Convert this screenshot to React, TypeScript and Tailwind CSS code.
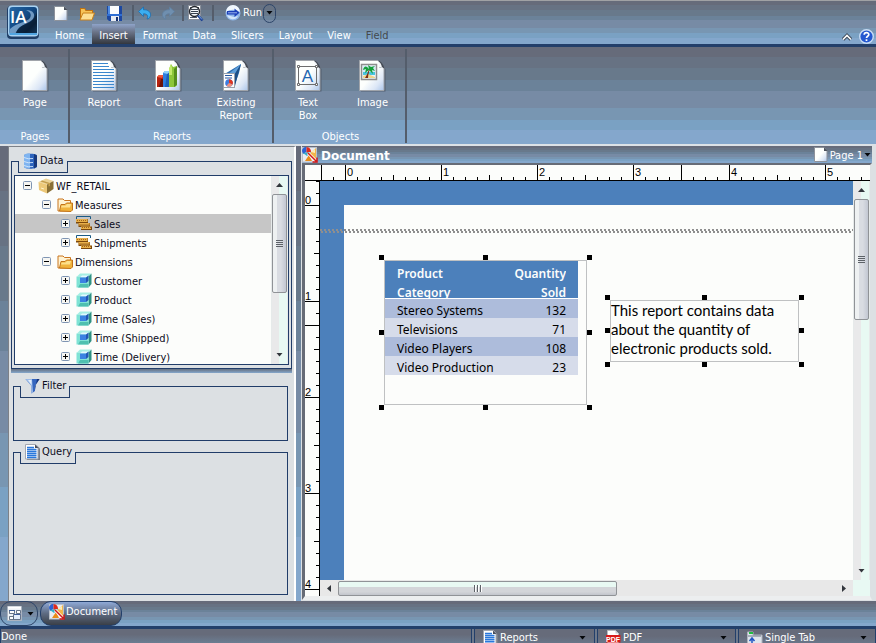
import { useState, type ReactNode } from "react";

const BANDS =
  "bg-[linear-gradient(#666b7a_10%,#677283_10%_22%,#68798b_22%_34%,#6b8299_34%_45%,#778ba5_45%_63%,#7896b2_63%_75%,#7aa1c3_75%_86%,#84a7cc_86%)]";

/* ---------- icons ---------- */

function PageShape({ children }: { children?: ReactNode }) {
  return (
    <svg width="27" height="32" viewBox="0 0 27 32" aria-hidden="true">
      <defs>
        <linearGradient id="sheet" x1="0" y1="0" x2="1" y2="1">
          <stop offset="0.5" stopColor="#fdfffd" />
          <stop offset="0.78" stopColor="#dbe6f6" />
          <stop offset="1" stopColor="#a9c4ea" />
        </linearGradient>
      </defs>
      <path d="M2 2H20L26.500 9V31.500H2Z" fill="#4e5868" opacity="0.8" />
      <path d="M0.500 0.500H19L25 8V30.500H0.500Z" fill="url(#sheet)" stroke="#a0a4aa" />
      <path d="M19 0.500C21 2 21 5 20 8C22 7 24 7 25.500 9C25 5 22 1 19 0.500Z" fill="#454b55" />
      <path d="M18.500 1C20 3 20 5 19.500 8C21 7 22 7 23 7.500C22.500 4 21 2 18.500 1Z" fill="#f4f7fa" />
      {children}
    </svg>
  );
}

function ReportArt() {
  return <path d="M2 3.500H17M2 6.500H18M2 9.500H23M2 12.500H23M2 15.500H23M2 18.500H23M2 21.500H23M2 24.500H23M2 27.500H23" stroke="#3a87cd" strokeWidth="1.200" />;
}

function ChartArt() {
  return (
    <g>
      <path d="M2 17L4 15H9V27H2Z" fill="#b5220f" />
      <path d="M2 17L4 15H9L7 18Z" fill="#f0553a" />
      <path d="M6 19H9V27H4Z" fill="#6b1208" />
      <path d="M8 13L10 11H15V27H8Z" fill="#2e7fe0" />
      <path d="M8 13L10 11H15L13 14Z" fill="#8ed0fb" />
      <path d="M12 14L15 12V27H10Z" fill="#1553a8" opacity="0.7" />
      <path d="M14 9L16 4L18 7L22 6V25L20 27H14Z" fill="#8cc63a" />
      <path d="M19 9L22 6V25L19 27Z" fill="#568f1c" />
      <path d="M14 9L16 4L17 8V15H14Z" fill="#c3ea6c" />
    </g>
  );
}

function ExistingArt() {
  return (
    <g>
      <path d="M18 4L0 15L7 17L11 27L16 13Z" fill="#2a6cb0" />
      <path d="M18 4L4 15L10 17Z" fill="#5d9ed8" />
      <path d="M18 4L10 17L12 26L15 14Z" fill="#1c4f86" />
      <rect x="0.500" y="13.500" width="11" height="14" fill="#fcfdfe" stroke="#9aa0aa" />
      <path d="M2 15.500H9M2 18H9" stroke="#2456a0" strokeWidth="1.200" />
      <circle cx="6" cy="23" r="3.800" fill="#3d7ce0" />
      <path d="M6 23V19.200A3.800 3.800 0 0 1 9.600 24.500Z" fill="#e2341f" />
      <path d="M6 23L9.600 24.500A3.800 3.800 0 0 1 3.500 25.800Z" fill="#f0907a" />
    </g>
  );
}

function TextBoxArt() {
  return (
    <g>
      <path d="M3.500 6.500H21.500V24.500H3.500Z" fill="none" stroke="#6d6d6d" />
      <path d="M2.500 5.500h2v2h-2zM20.500 5.500h2v2h-2zM2.500 23.500h2v2h-2zM20.500 23.500h2v2h-2z" fill="#fff" stroke="#6d6d6d" />
      <text x="12.500" y="22" textAnchor="middle" fontSize="17" fill="#1f66b0" fontFamily="Liberation Sans, sans-serif">A</text>
    </g>
  );
}

function ImageArt() {
  return (
    <g>
      <rect x="2.500" y="4.500" width="15" height="15" fill="#eaf4fa" stroke="#8d8d8d" strokeWidth="1.500" />
      <rect x="4" y="6" width="12" height="6" fill="#d3ecf8" />
      <rect x="4" y="12" width="12" height="3" fill="#49c5e0" />
      <path d="M4 18V16L9 14L16 17V18Z" fill="#efd58d" />
      <path d="M10 9C9 12 8 15 6 18H9C9 15 10 12 11 9Z" fill="#7d2d14" />
      <path d="M10 9C7 5 5 6 4 10L7 9L6 13L10 10L14 14L13 10L16 11L14 8L16 6L12 7L9 5Z" fill="#17a03a" />
    </g>
  );
}

function SmallPage() {
  return (
    <svg width="14" height="15" viewBox="0 0 14 15" aria-hidden="true">
      <path d="M0.500 0.500H10L13 4V14.500H0.500Z" fill="url(#sheet)" stroke="#8d929b" />
      <path d="M10 0.500V4H13.500Z" fill="#4a505b" />
    </svg>
  );
}

function DocLines() {
  return (
    <svg width="15" height="16" viewBox="0 0 15 16" aria-hidden="true">
      <path d="M2 1.500H12L15 4.500V16H2Z" fill="#7a7e88" />
      <path d="M0.500 0.500H10.500L13 3.500V15H0.500Z" fill="#fff" stroke="#a2a7b0" />
      <path d="M2 3.500H9M2 5.500H11.500M2 7.500H11.500M2 9.500H11.500M2 11.500H11.500M2 13.500H11.500" stroke="#2a78dc" strokeWidth="1.400" />
      <path d="M10 0.500V4H13.500Z" fill="#474c58" />
    </svg>
  );
}

function Folder() {
  return (
    <svg width="16" height="16" viewBox="0 0 16 16" aria-hidden="true">
      <path d="M1 14V2H6L7.500 3.500H13.500V14Z" fill="#fff3d2" stroke="#c9741d" />
      <path d="M2.500 14L4 7.500H8L9.500 6H15.500V13L14 14.500Z" fill="#f0b33c" stroke="#c2741a" />
      <path d="M4.500 8.500H8.500L10 7H14L13 10.500H4Z" fill="#fde08c" />
    </svg>
  );
}

function OpenFolder() {
  return (
    <svg width="16" height="15" viewBox="0 0 16 15" aria-hidden="true">
      <path d="M1 13V2H6L7 4H14V13Z" fill="#c07310" />
      <path d="M2 12V3H5.500L6.500 5H13V12Z" fill="#f7c356" />
      <path d="M1 14L4 7H15.500L13 14Z" fill="#fddf93" stroke="#c8801a" />
    </svg>
  );
}

function Floppy() {
  return (
    <svg width="15" height="15" viewBox="0 0 15 15" aria-hidden="true">
      <path d="M0 0H15V15H2L0 13Z" fill="#1d48a0" />
      <path d="M1 0H3V8H1Z" fill="#4f8ce2" />
      <rect x="3" y="0" width="9" height="8" fill="#fbfcfd" />
      <path d="M0 8H15V10H0Z" fill="#2f6fd4" />
      <rect x="4" y="10" width="8" height="5" fill="#e8ecf2" />
      <rect x="9" y="11" width="2" height="4" fill="#16306c" />
    </svg>
  );
}

function Arrow({ flip = false, color, edge }: { flip?: boolean; color: string; edge: string }) {
  return (
    <svg width="14" height="14" viewBox="0 0 14 14" aria-hidden="true">
      <path
        transform={flip ? "translate(14 0) scale(-1 1)" : undefined}
        d="M0.500 5.500L5.500 1V3.800C10 3.500 13 6 12.500 9.500C12 12 10.500 13 9 13C10.500 10 9.500 7.800 5.500 7.800V10.500Z"
        fill={color}
        stroke={edge}
        strokeWidth="0.800"
      />
    </svg>
  );
}

function Preview() {
  return (
    <svg width="16" height="17" viewBox="0 0 16 17" aria-hidden="true">
      <path d="M0.500 0.500H12.500V14.500H0.500Z" fill="#fff" stroke="#8a909b" />
      <path d="M2 2.500H11M2 12.500H9" stroke="#4f5a6c" />
      <circle cx="6.500" cy="6.500" r="5" fill="#f4f7fa" stroke="#23262c" strokeWidth="1.300" />
      <path d="M3 4.500H10M3 6.500H10M3 8.500H10" stroke="#39424f" />
      <path d="M10 10.500L14.500 15.500" stroke="#1c3e90" strokeWidth="2.600" />
      <path d="M10.500 10.500L14 14.500" stroke="#6ea0e8" />
    </svg>
  );
}

function RunBall() {
  return (
    <svg width="17" height="16" viewBox="0 0 17 16" aria-hidden="true">
      <circle cx="8" cy="8" r="7.500" fill="#8fb6e8" />
      <path d="M1 7A7 7 0 0 1 15 7C11 4 5 4 1 7Z" fill="#f1f7fd" />
      <path d="M2 10A6 6 0 0 0 13 11L9 12Z" fill="#d3e7fa" />
      <path d="M2 6H9.500V3.500L14.500 7.800L9.500 12V9.500H2Z" fill="#1b3fb8" />
      <path d="M3 7.800H12" stroke="#b9d2fb" strokeWidth="0.800" />
    </svg>
  );
}

function Logo() {
  return (
    <svg width="33" height="34" viewBox="0 0 33 34" aria-hidden="true">
      <defs>
        <linearGradient id="logo" x1="0" y1="0" x2="1" y2="1">
          <stop offset="0" stopColor="#2767a4" />
          <stop offset="0.450" stopColor="#124a86" />
          <stop offset="0.750" stopColor="#0b2847" />
          <stop offset="1" stopColor="#2676b8" />
        </linearGradient>
      </defs>
      <rect x="0" y="1" width="32" height="33" rx="4" fill="#203f68" />
      <rect x="1" y="0.500" width="30.500" height="31" rx="4" fill="#a9d2f2" />
      <rect x="2.500" y="2" width="27.500" height="28" rx="3" fill="url(#logo)" />
      <path d="M19 5C26 5 29 9 26 14C23 18 15 19 11 24C9 27 9 28 10 30H3V24C9 18 20 17 23 13C25 9 23 7 19 5Z" fill="#8fb7dc" opacity="0.75" />
      <path d="M8 30C9 25 14 21 19 19C25 17 28 13 30 7V30Z" fill="#091a2e" opacity="0.650" />
      <path d="M2.500 28H30V30H2.500Z" fill="#51a4e0" />
      <text x="3" y="18" fontSize="17" fontWeight="600" fill="#fff" fontFamily="Open Sans, sans-serif">IA</text>
    </svg>
  );
}

function DocumentIcon() {
  return (
    <svg width="16" height="16" viewBox="0 0 16 16" aria-hidden="true">
      <rect x="0.500" y="0.500" width="14" height="14.500" fill="#e8edf3" stroke="#b9bfc8" />
      <path d="M0 4A4 4 0 0 1 4.500 0V5L1 7Z" fill="#2d62d2" />
      <path d="M4.500 0A5 5 0 0 1 9 5L4.500 6Z" fill="#e02a1c" />
      <path d="M1 6L9 5L5 9Z" fill="#35b0c9" />
      <path d="M14 1V13L6 8Z" fill="#f2b54a" />
      <path d="M9 5L13 2V6Z" fill="#fdeeb8" />
      <path d="M3 14L7 8L10 14Z" fill="#e98c18" />
      <path d="M6 6L14 14" stroke="#fff" strokeWidth="3" />
      <path d="M6 6L14 14M15 10.500V15H10.500" fill="none" stroke="#cf1616" strokeWidth="1.500" />
    </svg>
  );
}

function Database() {
  return (
    <svg width="15" height="16" viewBox="0 0 15 16" aria-hidden="true">
      <path d="M1 2.500C1 0 14 0 14 2.500V13.500C14 16.500 1 16.500 1 13.500Z" fill="#2c63bd" />
      <path d="M1 3C1 0 7 0.500 7 0.700V15.500C2 15.500 1 14.500 1 13.500Z" fill="#7fb4f0" />
      <path d="M11 1V15.500L14 13.500V2.500Z" fill="#17387c" />
      <path d="M1 4.500Q5 6.500 10 5.500M1 8.500Q5 10.500 10 9.500M1 12.500Q5 14.500 10 13.500" fill="none" stroke="#d5e8fb" strokeWidth="0.900" />
    </svg>
  );
}

function Funnel() {
  return (
    <svg width="15" height="16" viewBox="0 0 15 16" aria-hidden="true">
      <path d="M0.500 1H14.500L10 8V13L6.500 15.500V8Z" fill="#3566bf" />
      <path d="M0.500 1H7L8 14.500L6.500 15.500V8Z" fill="#9dbce9" />
      <path d="M3 2L6.500 7V2Z" fill="#e3eefb" />
      <path d="M12 1H14.500L10 8V12Z" fill="#17357c" />
    </svg>
  );
}

function Box() {
  return (
    <svg width="16" height="16" viewBox="0 0 16 16" aria-hidden="true">
      <path d="M0.500 4L8 0.500L15.500 3L9 6.500Z" fill="#ecd396" />
      <path d="M0.500 4L9 6.500V15.500L1 12Z" fill="#ecc878" />
      <path d="M9 6.500L15.500 3V11L9 15.500Z" fill="#8a7035" />
      <path d="M4 2.500L12 5V8L10.500 8.500V6L2.500 3.500Z" fill="#c39d4c" />
      <path d="M3 10L6 11" stroke="#fff3cc" />
    </svg>
  );
}

function MeasureIcon() {
  return (
    <svg width="16" height="15" viewBox="0 0 16 15" aria-hidden="true">
      <path d="M0.500 3V0.500H14.500V3" fill="none" stroke="#1b5b85" />
      <path d="M0 3H12V7H14V10.500H16V14H5V11H2.500V7.500H0Z" fill="#7c480c" />
      <path d="M0 3H11.500V6H0ZM2.500 7H13.500V9.500H2.500ZM5 10.500H15V13H5Z" fill="#e8b04a" />
      <path d="M1 4.500H11M3.500 8.500H13M6 11.500H15" stroke="#a4661a" strokeDasharray="1 1" />
    </svg>
  );
}

function Cube() {
  return (
    <svg width="16" height="15" viewBox="0 0 16 15" aria-hidden="true">
      <path d="M4 0.500H15.500L12.500 3.500H1Z" fill="#a6efe4" />
      <path d="M12.500 3.500L15.500 0.500V11L12.500 14.500Z" fill="#2f9184" />
      <path d="M0.500 3.500H12.500V14.500H0.500Z" fill="#7fe3d5" />
      <path d="M2 14.500L4 11H12.500V14.500Z" fill="#4fc0b0" />
      <path d="M6 2.500H12.500L10.500 4.500H4Z" fill="#e2f8ff" />
      <path d="M4 4.500H10V10H4Z" fill="#3b82e2" />
      <path d="M10 4.500L12.500 2.500V8L10 10Z" fill="#2256b4" />
    </svg>
  );
}

function Windows() {
  return (
    <svg width="16" height="16" viewBox="0 0 16 16" aria-hidden="true">
      <path d="M0.500 0.500H14.500V14.500H0.500Z" fill="#eef2f6" stroke="#aab3c0" />
      <path d="M1 1.500H14" stroke="#fff" strokeWidth="2" />
      <path d="M2.500 4.500h5v3h-5zM2.500 10.500h4v3h-4zM9.500 4.500h4v3h-4z" fill="#fff" stroke="#44546c" strokeWidth="0.800" />
      <path d="M6.500 8.500h7v5h-7z" fill="#e6effc" stroke="#44546c" strokeWidth="0.800" />
      <path d="M2 4.500H8M7 8.500H13.500" stroke="#3f5f9a" />
    </svg>
  );
}

function PdfIcon() {
  return (
    <svg width="15" height="16" viewBox="0 0 15 16" aria-hidden="true">
      <path d="M1.500 0.500H9.500L12.500 3.500V15H1.500Z" fill="#fff" stroke="#b9bcc2" />
      <path d="M9.500 0.500V3.500H12.500Z" fill="#c8ccd2" />
      <rect x="0" y="5" width="14.500" height="7.500" fill="#d81a1a" />
      <text x="7" y="11.500" textAnchor="middle" fontSize="7" fontWeight="bold" fill="#fff" fontFamily="Liberation Sans, sans-serif">PDF</text>
    </svg>
  );
}

function TabIcon() {
  return (
    <svg width="16" height="15" viewBox="0 0 16 15" aria-hidden="true">
      <path d="M0.500 14V1H6V4H15V14Z" fill="#dfe5ec" stroke="#aeb4bf" />
      <rect x="2" y="1" width="4" height="2" fill="#1fbf3f" />
      <path d="M1 5H14" stroke="#6f7785" />
      <path d="M5 14V8M2.500 10L5 7L7.500 10" fill="none" stroke="#2155c4" strokeWidth="1.500" />
    </svg>
  );
}

function Caret({ up = false, dark = "#05070a" }: { up?: boolean; dark?: string }) {
  return (
    <svg width="7" height="4" viewBox="0 0 7 4" aria-hidden="true">
      <path d={up ? "M0 4H7L3.500 0Z" : "M0.500 0H6.500L3.500 3.500Z"} fill={dark} />
    </svg>
  );
}

/* ---------- shared parts ---------- */

function Divider() {
  return <span className="h-4 w-[2px] bg-[#545d6b]" />;
}

function VScroll({ thumb }: { thumb: string }) {
  return (
    <div className="flex w-[17px] shrink-0 flex-col border-x border-[#e6eaea] bg-[linear-gradient(90deg,#e9e9ea_45%,#e8f9f3_45%)]">
      <button type="button" aria-label="Scroll up" className="flex h-[18px] shrink-0 items-center justify-center">
        <Caret up dark="#32363c" />
      </button>
      <div
        className={`flex flex-col items-center justify-center gap-px rounded-[2px] border border-[#909397] bg-[linear-gradient(90deg,#eef1f2_30%,#d9dce2_30%_60%,#c2c7d2)] ${thumb}`}
      >
        <i className="h-px w-[7px] bg-[#5d6268]" />
        <i className="h-px w-[7px] bg-[#5d6268]" />
        <i className="h-px w-[7px] bg-[#5d6268]" />
        <i className="h-px w-[7px] bg-[#5d6268]" />
      </div>
      <button type="button" aria-label="Scroll down" className="mt-auto flex h-[18px] shrink-0 items-center justify-center">
        <Caret dark="#32363c" />
      </button>
    </div>
  );
}

interface GroupBoxProps {
  title: string;
  icon: ReactNode;
  className?: string;
  children?: ReactNode;
}

function GroupBox({ title, icon, className = "", children }: GroupBoxProps) {
  return (
    <section className={`relative border border-[#213d69] ${className}`}>
      <h2 className="absolute -top-px left-[6px] flex h-3 items-end border-x border-b border-[#213d69] bg-[#dce0e3] pr-[3px] pl-1">
        <span className="flex h-[22px] items-center gap-[2px] leading-4">
          {icon}
          <span>{title}</span>
        </span>
      </h2>
      {children}
    </section>
  );
}

/* ---------- top ---------- */

const TABS = ["Home", "Insert", "Format", "Data", "Slicers", "Layout", "View", "Field"];

function TitleBar() {
  const [active, setActive] = useState("Insert");
  return (
    <header className={`flex h-[47px] shrink-0 border-t border-b-3 border-t-[#a0a1a4] border-b-[#233f6a] ${BANDS}`}>
      <button type="button" aria-label="InfoAssist menu" className="ml-[7px] self-start pt-1">
        <Logo />
      </button>
      <div className="flex flex-1 flex-col">
        <div className="ml-[14px] flex h-[23px] items-center pt-px">
          <button type="button" aria-label="New"><SmallPage /></button>
          <button type="button" aria-label="Open" className="ml-[11px]"><OpenFolder /></button>
          <button type="button" aria-label="Save" className="mr-[10px] ml-3"><Floppy /></button>
          <Divider />
          <button type="button" aria-label="Undo" className="ml-1"><Arrow color="#3aaef0" edge="#1c6cae" /></button>
          <button type="button" aria-label="Redo" className="mr-[7px] ml-[9px]"><Arrow flip color="#6f8faf" edge="#5f7f9f" /></button>
          <Divider />
          <button type="button" aria-label="Preview" className="mr-2 ml-1"><Preview /></button>
          <Divider />
          <button type="button" className="ml-[11px] flex items-center gap-px text-white">
            <RunBall />
            <span className="pt-px">Run</span>
          </button>
          <button
            type="button"
            aria-label="Run options"
            className="ml-px flex h-[19px] w-[13px] items-center justify-center rounded-full border border-[#2d4569]"
          >
            <Caret />
          </button>
        </div>
        <nav className="ml-2 flex h-5 gap-px">
          {TABS.map((tab) => (
            <button
              key={tab}
              type="button"
              onClick={() => setActive(tab)}
              className={`px-[7px] pt-[3px] leading-4 ${
                tab === active ? "bg-[linear-gradient(#8fa3c9,#6b7488_40%,#33373e)]" : ""
              } ${tab === "Field" ? "text-[#45484c]" : "text-white"}`}
            >
              {tab}
            </button>
          ))}
        </nav>
      </div>
      <div className="mr-[2px] flex items-end gap-[7px]">
        <button type="button" aria-label="Collapse ribbon" className="pb-[3px]">
          <svg width="10" height="8" viewBox="0 0 10 8" aria-hidden="true">
            <path d="M1 6.500L5 2.500L9 6.500" fill="none" stroke="#3b4656" strokeWidth="3.500" />
            <path d="M1 6.500L5 2.500L9 6.500" fill="none" stroke="#fff" strokeWidth="1.600" />
          </svg>
        </button>
        <button type="button" aria-label="Help">
          <svg width="15" height="15" viewBox="0 0 15 15" aria-hidden="true">
            <circle cx="7.500" cy="7.500" r="6.800" fill="#2458d0" stroke="#c8dcf4" strokeWidth="1.400" />
            <path d="M5.200 5.800C5.200 2.900 9.800 2.900 9.800 5.600C9.800 7.300 7.500 7.200 7.500 9M7.500 10.200V12" fill="none" stroke="#fff" strokeWidth="1.700" />
          </svg>
        </button>
      </div>
    </header>
  );
}

function RibbonButton({ label, art, className = "w-16" }: { label: string; art?: ReactNode; className?: string }) {
  return (
    <button type="button" className={`flex flex-col items-center ${className}`}>
      <PageShape>{art}</PageShape>
      <span className="mt-1 w-12 leading-[13px]">{label}</span>
    </button>
  );
}

function RibbonGroup({ label, children }: { label: string; children: ReactNode }) {
  return (
    <div className="mt-[2px] mb-px flex flex-col border-r-2 border-[#545d6b] pt-[11px] pl-[2px]">
      <div className="flex flex-1 items-start">{children}</div>
      <div className="text-center leading-[13px]">{label}</div>
    </div>
  );
}

function Ribbon() {
  return (
    <div className={`flex h-[99px] shrink-0 border-b-2 border-[#dce1e6] text-white ${BANDS}`}>
      <RibbonGroup label="Pages">
        <RibbonButton label="Page" className="w-[66px]" />
      </RibbonGroup>
      <RibbonGroup label="Reports">
        <RibbonButton label="Report" art={<ReportArt />} />
        <RibbonButton label="Chart" art={<ChartArt />} />
        <RibbonButton label="Existing Report" art={<ExistingArt />} className="w-18" />
      </RibbonGroup>
      <RibbonGroup label="Objects">
        <RibbonButton label="Text Box" art={<TextBoxArt />} className="w-16 [&>span]:w-7" />
        <RibbonButton label="Image" art={<ImageArt />} className="w-[65px]" />
      </RibbonGroup>
    </div>
  );
}

/* ---------- left panel ---------- */

interface TreeNode {
  label: string;
  level: 0 | 1 | 2;
  icon: ReactNode;
}

const TREE: TreeNode[] = [
  { label: "WF_RETAIL", level: 0, icon: <Box /> },
  { label: "Measures", level: 1, icon: <Folder /> },
  { label: "Sales", level: 2, icon: <MeasureIcon /> },
  { label: "Shipments", level: 2, icon: <MeasureIcon /> },
  { label: "Dimensions", level: 1, icon: <Folder /> },
  { label: "Customer", level: 2, icon: <Cube /> },
  { label: "Product", level: 2, icon: <Cube /> },
  { label: "Time (Sales)", level: 2, icon: <Cube /> },
  { label: "Time (Shipped)", level: 2, icon: <Cube /> },
  { label: "Time (Delivery)", level: 2, icon: <Cube /> },
];

const INDENT = ["pl-2", "pl-[27px]", "pl-[46px]"];

function Tree() {
  const [selected, setSelected] = useState("Sales");
  return (
    <ul role="tree" className="min-w-0 flex-1">
      {TREE.map((node) => (
        <li
          key={node.label}
          role="treeitem"
          aria-selected={selected === node.label}
          onClick={() => setSelected(node.label)}
          className={`flex h-[19px] items-center ${INDENT[node.level]} ${selected === node.label ? "bg-[#c6c6c6]" : ""}`}
        >
          <svg width="9" height="9" viewBox="0 0 9 9" className="mr-[6px] shrink-0" aria-hidden="true">
            <rect x="0.500" y="0.500" width="8" height="8" rx="1" fill="#f6f6f2" stroke="#7f95b3" />
            <path d={node.level === 2 ? "M2 4.500H7M4.500 2V7" : "M2 4.500H7"} stroke="#000" />
          </svg>
          {node.icon}
          <span className="ml-[2px] pt-[3px] leading-4 whitespace-nowrap">{node.label}</span>
        </li>
      ))}
    </ul>
  );
}

function SidePanel() {
  return (
    <aside className="flex w-72 shrink-0 flex-col border-t border-r-2 border-l border-t-[#7d8188] border-r-white border-l-[#7d8188] bg-[#dce0e3] px-[2px] text-[#0c0c1c]">
      <GroupBox title="Data" icon={<Database />} className="mt-[14px] px-[2px] pt-[13px] pb-[3px]">
        <div className="flex h-[190px] overflow-hidden border border-[#213d69] bg-[#fcfdfb]">
          <Tree />
          <VScroll thumb="h-[99px]" />
        </div>
      </GroupBox>
      <div className="h-1 shrink-0 bg-[linear-gradient(#66707f,#84a7cc)]" />
      <GroupBox title="Filter" icon={<Funnel />} className="mt-[13px] mr-1 ml-[2px] h-[55px] shrink-0" />
      <GroupBox title="Query" icon={<DocLines />} className="mt-[11px] mr-1 mb-[6px] ml-[2px] flex-1" />
    </aside>
  );
}

/* ---------- document ---------- */

// Twelve pixels to a tick, eight ticks to an inch; both rulers start two ticks before zero.
const H_TICKS = Array.from({ length: 46 }, (_, i) => i - 2);
const V_TICKS = Array.from({ length: 35 }, (_, i) => i - 2);

function HRuler() {
  return (
    <div className="flex h-4 shrink-0 items-stretch overflow-hidden border-b border-black bg-[#fcfdfb] pl-4">
      {H_TICKS.map((k) => {
        const major = k % 8 === 0 || k === -2 || k === 28;
        return (
          <div key={k} className="flex w-3 shrink-0 items-end">
            <i className={`w-px shrink-0 bg-black ${major ? "h-full" : k % 4 === 0 ? "h-[5px]" : "h-[3px]"}`} />
            {k % 8 === 0 && <span className="ml-px self-start pt-px leading-3">{k / 8}</span>}
          </div>
        );
      })}
    </div>
  );
}

function VRuler() {
  return (
    <div className="w-[15px] shrink-0 overflow-hidden border-r border-black bg-[#fcfdfb]">
      {V_TICKS.map((k) => {
        const major = (k % 8 === 0 && k >= 0) || k === 10;
        return (
          <div key={k} className={`flex items-end justify-between ${k === -2 ? "h-px" : "h-3"}`}>
            <span className="w-0 pb-px leading-[9px]">{k >= 0 && k % 8 === 0 ? k / 8 : ""}</span>
            <i className={`h-px shrink-0 bg-black ${major ? "w-full" : k % 4 === 0 ? "w-[5px]" : "w-[3px]"}`} />
          </div>
        );
      })}
    </div>
  );
}

const HANDLES = [
  "-top-[6px] -left-[6px]",
  "-top-[6px] left-1/2 -ml-[3px]",
  "-top-[6px] -right-[6px]",
  "top-1/2 -mt-[3px] -left-[6px]",
  "top-1/2 -mt-[3px] -right-[6px]",
  "-bottom-[6px] -left-[6px]",
  "-bottom-[6px] left-1/2 -ml-[3px]",
  "-bottom-[6px] -right-[6px]",
];

function Selected({ className, children }: { className: string; children: ReactNode }) {
  return (
    <div className={`absolute border border-[#bfc1c2] ${className}`}>
      {children}
      {HANDLES.map((pos) => (
        <i key={pos} className={`absolute size-[5px] bg-black ${pos}`} />
      ))}
    </div>
  );
}

const ROWS = [
  { name: "Stereo Systems", sold: 132 },
  { name: "Televisions", sold: 71 },
  { name: "Video Players", sold: 108 },
  { name: "Video Production", sold: 23 },
];

function Canvas() {
  return (
    <div className="relative flex-1 overflow-hidden bg-[#4c80bb] pt-6 pl-6">
      <div className="h-full bg-[#fcfdfb]" />
      <div className="absolute inset-x-0 top-12 h-1">
        <div className="h-[2px] bg-[repeating-linear-gradient(90deg,#8f8f8f_0_2px,transparent_2px_4px)]" />
        <div className="h-[2px] bg-[repeating-linear-gradient(90deg,transparent_0_1px,#8f8f8f_1px_3px,transparent_3px_4px)]" />
      </div>
      <Selected className="top-[79px] left-16 h-[145px] w-[203px]">
        <table className="w-[193px] border-collapse font-['Noto_Sans',sans-serif] text-[12px] text-black">
          <thead className="bg-[#4c80bb] text-[#fcfdfb]">
            <tr className="border-b border-white align-top leading-[19px]">
              <th className="pt-[3px] pl-3 text-left font-semibold"><div className="h-[34px] overflow-hidden">Product<br />Category</div></th>
              <th className="pt-[3px] pr-3 text-right font-semibold"><div className="h-[34px] overflow-hidden">Quantity<br />Sold</div></th>
            </tr>
          </thead>
          <tbody>
            {ROWS.map((row) => (
              <tr key={row.name} className="leading-[14px] odd:bg-[#adbcdb] even:bg-[#d6dcea]">
                <td className="pt-[5px] pl-3">{row.name}</td>
                <td className="pt-[5px] pr-3 text-right">{row.sold}</td>
              </tr>
            ))}
          </tbody>
        </table>
      </Selected>
      <Selected className="top-[119px] left-[290px] h-[62px] w-[189px]">
        <p className="whitespace-nowrap font-['Lato',sans-serif] text-[15px] leading-[19px] text-black">
          This report contains data
          <br />
          about the quantity of
          <br />
          electronic products sold.
        </p>
      </Selected>
    </div>
  );
}

function DocumentPanel() {
  return (
    <main className="flex min-w-0 flex-1 flex-col border-r-4 border-b border-l border-[#dce0e3]">
      <div className={`flex h-[17px] shrink-0 items-center text-white ${BANDS}`}>
        <DocumentIcon />
        <h1 className="ml-[3px] pt-[2px] font-['DejaVu_Sans',sans-serif] text-[12px] leading-4 font-bold">Document</h1>
        <button type="button" className="mr-px ml-auto flex items-center">
          <SmallPage />
          <span className="mr-px ml-[2px] pt-[2px] leading-4">Page 1</span>
          <Caret />
        </button>
      </div>
      <div className="flex min-h-0 flex-1 flex-col border-t-2 border-r-2 border-b-4 border-l-3 border-t-[#666b76] border-r-[#dce0e3] border-b-[#eceeef] border-l-[#666b76] font-['Liberation_Sans',sans-serif] text-[11px] text-black">
        <HRuler />
        <div className="flex min-h-0 flex-1">
          <VRuler />
          <div className="flex min-w-0 flex-1 flex-col">
            <div className="flex min-h-0 flex-1">
              <Canvas />
              <VScroll thumb="h-[121px]" />
            </div>
            <div className="flex h-4 shrink-0">
              <div className="flex flex-1 bg-[#e8e8e8]">
                <button type="button" aria-label="Scroll left" className="flex w-[18px] items-center justify-center">
                  <svg width="4" height="7" viewBox="0 0 4 7" aria-hidden="true"><path d="M4 0V7L0 3.500Z" fill="#32363c" /></svg>
                </button>
                <div className="mt-px flex w-[279px] items-center justify-center gap-px rounded-[2px] border border-[#909397] bg-[linear-gradient(#e8f9f3_40%,#d3d5d9_40%_75%,#c2c5cc)]">
                  <i className="h-[7px] w-[2px] border-r border-white bg-[#5d6268]" />
                  <i className="h-[7px] w-[2px] border-r border-white bg-[#5d6268]" />
                  <i className="h-[7px] w-[2px] border-r border-white bg-[#5d6268]" />
                </div>
                <button type="button" aria-label="Scroll right" className="ml-auto flex w-[18px] items-center justify-center">
                  <svg width="4" height="7" viewBox="0 0 4 7" aria-hidden="true"><path d="M0 0V7L4 3.500Z" fill="#32363c" /></svg>
                </button>
              </div>
              <div className="w-[17px] bg-[#e8f9f3]" />
            </div>
          </div>
        </div>
      </div>
    </main>
  );
}

/* ---------- bottom ---------- */

function TaskBar() {
  return (
    <div className={`flex h-[25px] shrink-0 gap-[2px] text-white ${BANDS}`}>
      <button type="button" aria-label="Windows" className="flex w-[38px] items-center justify-end gap-1 rounded-[11px] border border-[#2d4569] pr-[3px]">
        <Windows />
        <Caret />
      </button>
      <button
        type="button"
        className="flex items-center gap-px rounded-[11px] border border-[#233f6a] bg-[linear-gradient(#8fa9d6,#5e6b82_50%,#3a3f47)] pr-1 pb-[3px] pl-2"
      >
        <DocumentIcon />
        <span className="leading-4">Document</span>
      </button>
    </div>
  );
}

const OUTPUTS = [
  { label: "Reports", icon: <DocLines />, className: "w-[121px]" },
  { label: "PDF", icon: <PdfIcon />, className: "w-[139px]" },
  { label: "Single Tab", icon: <TabIcon />, className: "w-[138px]" },
];

function StatusBar() {
  return (
    <footer className="flex h-[17px] shrink-0 gap-[2px] overflow-hidden border-t-3 border-[#233f6a] bg-[#6d788a] text-white">
      <div className="flex-1 border-x border-[#233f6a] bg-[linear-gradient(#666b7a_40%,#6b7d92)] leading-[15px]">Done</div>
      {OUTPUTS.map((output) => (
        <button
          key={output.label}
          type="button"
          className={`flex h-[18px] items-center gap-[2px] border-x border-[#233f6a] bg-[linear-gradient(#666b7a_40%,#6b7d92)] pr-2 pl-2 ${output.className}`}
        >
          {output.icon}
          <span className="mr-auto leading-[14px]">{output.label}</span>
          <Caret />
        </button>
      ))}
    </footer>
  );
}

export default function App() {
  return (
    <div className="flex h-screen flex-col overflow-hidden font-['DejaVu_Sans_Condensed','Noto_Sans',sans-serif] text-[11px]">
      <TitleBar />
      <Ribbon />
      <div className={`flex min-h-0 flex-1 gap-[5px] pl-2 ${BANDS}`}>
        <SidePanel />
        <DocumentPanel />
      </div>
      <TaskBar />
      <StatusBar />
    </div>
  );
}
